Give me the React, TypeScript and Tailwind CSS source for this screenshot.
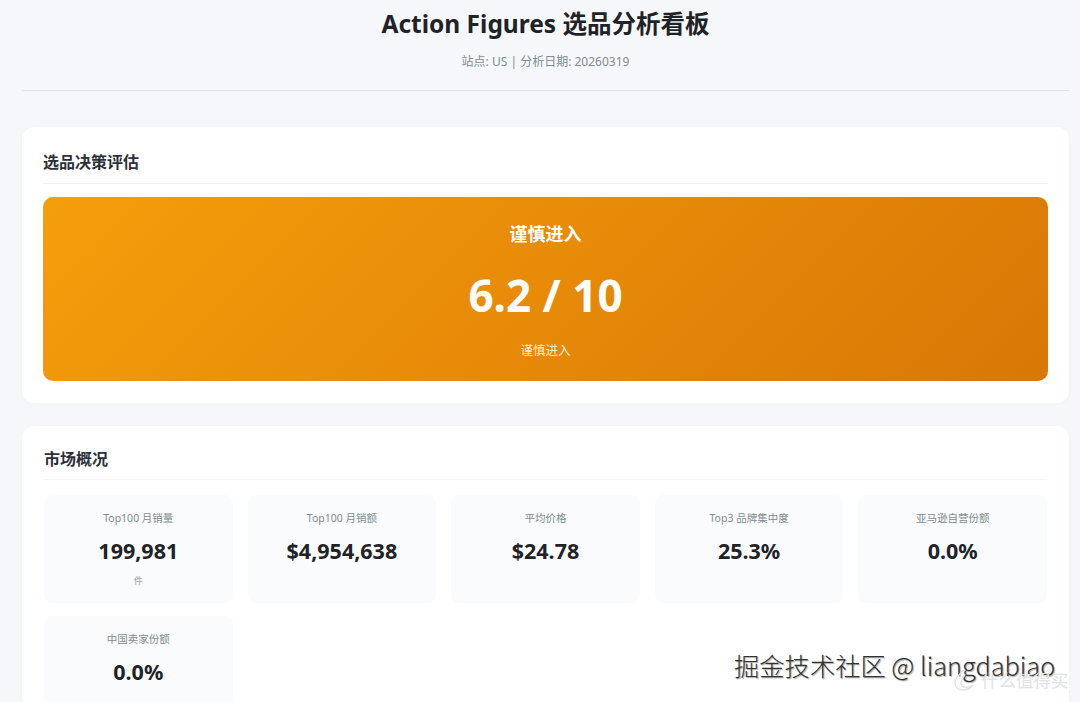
const metrics = [
  { label: "Top100 月销量", value: "199,981", unit: "件" },
  { label: "Top100 月销额", value: "$4,954,638" },
  { label: "平均价格", value: "$24.78" },
  { label: "Top3 品牌集中度", value: "25.3%" },
  { label: "亚马逊自营份额", value: "0.0%" },
  { label: "中国卖家份额", value: "0.0%" },
];

function Metric({ label, value, unit }: { label: string; value: string; unit?: string }) {
  return (
    <div className="h-[108px] rounded-lg bg-[#f9fbfd] pt-[15px] text-center">
      <div className="text-[10.5px] leading-[16px] text-[#7f8c8d]">{label}</div>
      <div className="mt-[10px] text-[21.5px] font-bold leading-[30px] text-[#1f2328]">{value}</div>
      {unit && <div className="mt-[8px] text-[9px] leading-[14px] text-[#95a5a6]">{unit}</div>}
    </div>
  );
}

export default function App() {
  return (
    <div className="relative h-[702px] overflow-hidden bg-[#f5f7fa] px-[22px] pr-[11px] font-['Noto_Sans','Noto_Sans_CJK_SC',sans-serif]">
      <header className="h-[91px] border-b border-[#dfe3ea] text-center">
        <h1 className="pt-[6px] text-[24.5px] font-bold leading-[36px] text-[#1f2328]">Action Figures 选品分析看板</h1>
        <p className="mt-[11px] text-[12px] leading-[18px] text-[#7f8c8d]">站点: US | 分析日期: 20260319</p>
      </header>

      <section className="mt-[36px] h-[276px] rounded-xl bg-white px-[21px] pt-[24px] shadow-[0_1px_4px_rgba(0,0,0,0.03)]">
        <h2 className="h-[33px] border-b border-[#eef0f3] text-[16px] font-bold leading-[22px] text-[#2c3038]">选品决策评估</h2>
        <div className="mt-[13px] h-[184px] rounded-[10px] bg-[linear-gradient(135deg,#f59e0b,#d97706)] pt-[25px] text-center text-white">
          <div className="text-[18px] font-bold leading-[24px]">谨慎进入</div>
          <div className="mt-[17px] text-[44px] font-bold leading-[64px]">6.2 / 10</div>
          <div className="mt-[15px] text-[12.5px] leading-[18px] text-[#fdeccd]">谨慎进入</div>
        </div>
      </section>

      <section className="mt-[23px] h-[300px] rounded-xl bg-white px-[22px] pt-[22px] shadow-[0_1px_4px_rgba(0,0,0,0.03)]">
        <h2 className="h-[32px] border-b border-[#f3f4f6] text-[16px] font-bold leading-[22px] text-[#2c3038]">市场概况</h2>
        <div className="mt-[15px] grid grid-cols-5 gap-x-[15px] gap-y-[13px]">
          {metrics.map((m) => (
            <Metric key={m.label} {...m} />
          ))}
        </div>
      </section>

      <div className="absolute left-[734px] top-[649px] text-[25.3px] font-light leading-[32px] text-[#333333] [text-shadow:1px_1px_1px_rgba(0,0,0,0.35)] font-['Noto_Sans_CJK_SC',sans-serif]">
        掘金技术社区 @ liangdabiao
      </div>
      <div className="absolute left-[953px] top-[668px] flex items-center gap-[6px] text-[17.5px] leading-[24px] text-[#e2e2e2] font-['Noto_Sans_CJK_SC',sans-serif]">
        <svg width="22" height="24" viewBox="0 0 22 24" fill="none" stroke="#e2e2e2" strokeWidth="1.5">
          <path d="M11 2 6 7C3 10 2 12 2 15c0 4 3 7 8 7 4 0 8-2 10-5-3 2-6 3-9 2-3-1-4-4-2-8l3-5" />
        </svg>
        <span>什么值得买</span>
      </div>
    </div>
  );
}
